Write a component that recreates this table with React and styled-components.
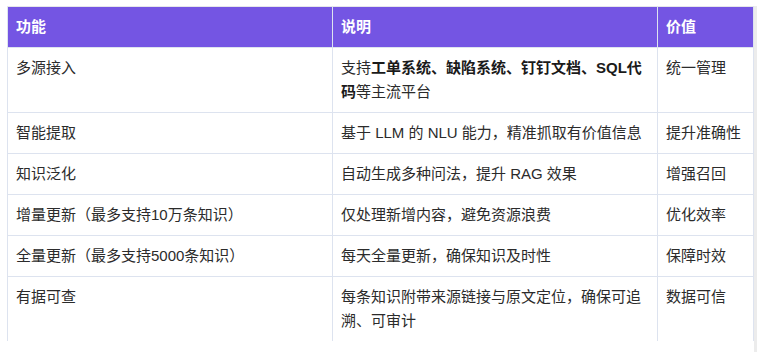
import React from "react";
import styled, { createGlobalStyle } from "styled-components";

const Global = createGlobalStyle`
  html, body { margin: 0; padding: 0; background: #ffffff; }
  body { font-family: "Liberation Sans", "Noto Sans CJK SC", sans-serif; }
`;

const Page = styled.div`
  padding: 6px 0 0 7px;
  display: flex;
  align-items: flex-start;
`;

const Scroller = styled.div`
  display: flex;
  align-items: flex-start;
`;

const Track = styled.div`
  width: 3px;
  height: 346px;
  background: #ececec;
`;

const Table = styled.table`
  width: 746px;
  border-collapse: collapse;
  table-layout: fixed;
  font-size: 15px;
  line-height: 24px;
  color: #2b2b2b;
`;

const Col = styled.col`
  width: ${(p) => p.$w}px;
`;

const HeadCell = styled.th`
  box-sizing: border-box;
  background: #7455e3;
  color: #ffffff;
  font-weight: 700;
  text-align: left;
  padding: 8px 8px;
  border: 1px solid #dde3ef;
  border-top-color: #e6e6ea;
`;

const Cell = styled.td`
  box-sizing: border-box;
  padding: 8px 8px;
  vertical-align: top;
  border: 1px solid #dde3ef;
  border-bottom: ${(p) => (p.$last ? "none" : "1px solid #dde3ef")};
`;

const Strong = styled.strong`
  font-weight: 700;
  color: #1a1a1a;
`;

const rows = [
  [
    "多源接入",
    <>
      支持<Strong>工单系统、缺陷系统、钉钉文档、SQL代码</Strong>等主流平台
    </>,
    "统一管理",
  ],
  ["智能提取", "基于 LLM 的 NLU 能力，精准抓取有价值信息", "提升准确性"],
  ["知识泛化", "自动生成多种问法，提升 RAG 效果", "增强召回"],
  ["增量更新（最多支持10万条知识）", "仅处理新增内容，避免资源浪费", "优化效率"],
  ["全量更新（最多支持5000条知识）", "每天全量更新，确保知识及时性", "保障时效"],
  ["有据可查", "每条知识附带来源链接与原文定位，确保可追溯、可审计", "数据可信"],
];

export default function App() {
  return (
    <>
      <Global />
      <Page>
        <Scroller>
          <Table>
            <colgroup>
              <Col $w={325} />
              <Col $w={325} />
              <Col $w={96} />
            </colgroup>
            <thead>
              <tr>
                <HeadCell>功能</HeadCell>
                <HeadCell>说明</HeadCell>
                <HeadCell>价值</HeadCell>
              </tr>
            </thead>
            <tbody>
              {rows.map((r, i) => (
                <tr key={i}>
                  {r.map((c, j) => (
                    <Cell key={j} $last={i === rows.length - 1}>
                      {c}
                    </Cell>
                  ))}
                </tr>
              ))}
            </tbody>
          </Table>
          <Track />
        </Scroller>
      </Page>
    </>
  );
}
